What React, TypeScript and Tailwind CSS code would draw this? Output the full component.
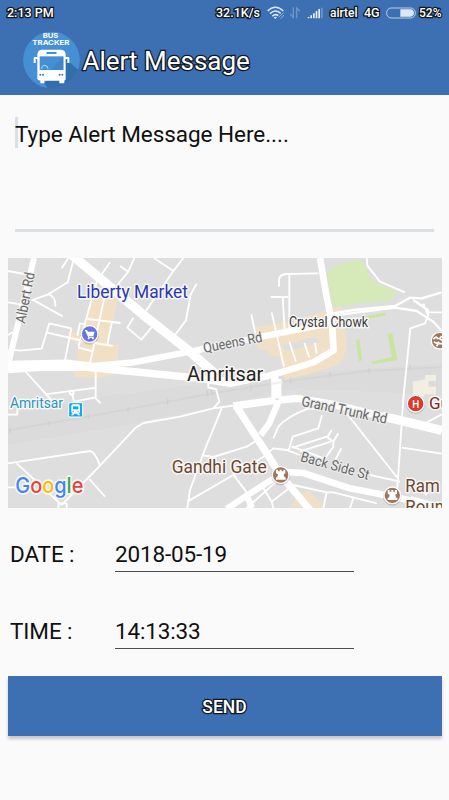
import React from "react";

const outlined =
  "text-white [paint-order:stroke_fill] [-webkit-text-stroke:2.6px_#111820]";

/* Street map, drawn at three units per pixel. */
const minorRoads = [
  "M24 48L88 60M24 142L62 148M102 136L188 184M95 136L145 118L203 82L222 9",
  "M145 118Q168 124 166 155M185 40L205 9M24 240L45 228",
  "M30 283L60 287L125 281L148 205L214 220M142 233L250 258L338 273M214 220L195 315",
  "M403 9L385 50L340 105M360 33L385 50M330 22L290 80L235 275M318 105L270 325",
  "M262 192L362 204M336 200L322 268M235 278L275 288M232 242L240 205L258 208",
  "M400 188L382 218L424 254L462 208M462 9L520 48L550 9M520 48L428 182",
  "M590 86L572 118L558 196L525 240M754 178L766 236M812 126H864M848 126L854 222M868 58V222",
  "M837 95V72Q840 58 860 57L955 55M815 172L852 335M868 260L888 320M913 264L928 308M945 264L950 296",
  "M75 348L145 425L160 440M135 418L290 398M287 348V430L302 445M216 414L222 440L287 427",
  "M24 479H52V460",
  "M24 625L270 588Q285 590 300 632M50 625L185 750M24 697H50M185 750L300 632L405 520L430 504L540 485L640 460L700 452",
  "M268 672L315 725M175 759V745H200V759",
  "M625 370V398L648 402L658 440L640 460M665 460L612 590L570 705L562 759M605 600L640 606L740 575L780 550M700 658L790 606L820 580L860 585L900 600M562 740L700 660",
  "M700 658L742 715M820 550L835 515Q860 485 925 460L990 466M865 590L878 545L955 520L966 480M878 578L980 545L1000 560L1000 575L970 618M900 590L992 560M983 545L995 525M1000 560L1015 535M1024 580L1000 625M875 575L920 590L970 610",
  "M1040 475L1195 672M1325 478L1270 508M1206 578L1325 596M1192 700L1210 430L1231 220L1275 205L1284 182L1270 146M1110 660L1200 680",
  "M1100 9L1102 32L1140 80L1215 112",
  "M790 700L815 740L820 759M815 740L880 690M740 759L840 670M880 690L980 712L1000 712L1130 745M980 712L970 759M1060 730L1050 759",
  "M1240 680L1280 720M1284 172H1325",
];

const MapRoads = () => (
  <g fill="none" stroke="#fff" strokeLinejoin="round">
    <g strokeWidth="5.500">
      {minorRoads.map((d) => (
        <path key={d} d={d} />
      ))}
      <circle cx="215" cy="413" r="6" />
    </g>
    <path d="M1000 175L1060 165L1185 153L1230 128L1265 130L1325 112M1000 182L1185 158L1250 168L1300 200L1325 228M1240 135L1284 165L1284 182" strokeWidth="7" />
    <path d="M102 9L24 330" strokeWidth="18" />
    <path d="M216 0L440 188L570 290L650 360" strokeWidth="28" />
    <path d="M24 327L200 323L280 333L400 322L590 286L790 244L998 203" strokeWidth="19" />
    <path d="M24 344L130 336L260 337L410 351L580 368L675 378" strokeWidth="22" />
    <path d="M620 375L690 386L800 364L860 347L940 322L1001 286L996 205L978 115L960 9" strokeWidth="20" />
    <path d="M824 362L832 425M700 453L820 437L890 430L1000 448L1325 528" strokeWidth="22" />
    <path d="M1150 484L1325 526" strokeWidth="27" />
    <path d="M829 372V425" strokeWidth="30" />
    <path d="M708 452L842 660L930 765" strokeWidth="22" />
    <path d="M835 440L808 505L782 540" strokeWidth="19" />
    <path d="M842 650L910 654L1050 700L1150 719L1250 740" strokeWidth="20" />
    <path d="M840 658L740 722L680 762M740 720L756 759" strokeWidth="19" />
    <path d="M1230 735L1325 760" strokeWidth="24" />
  </g>
);

const Castle = ({ x, y }: { x: number; y: number }) => (
  <g transform={`translate(${x} ${y})`}>
    <circle cy="3" r="28" fill="#000" opacity=".15" />
    <circle r="25" fill="#a1765c" stroke="#fff" strokeWidth="4" />
    <path d="M-14-16h6v5h5v-5h6v5h5v-5h6v11l-5 3 2 9h4v7h-29v-7h4l2-9-6-3z" fill="#fff" />
  </g>
);

const Map = () => (
  <svg
    viewBox="24 9 1302 750"
    preserveAspectRatio="none"
    className="block h-[250px] w-[434px] font-[Roboto,sans-serif]"
  >
    <rect x="24" y="9" width="1302" height="750" fill="#dedede" />
    <path d="M24 480L280 430L620 385L860 360L1325 325V420L880 400L640 456L430 500L24 570z" fill="#dbdbdb" />
    <g fill="#f1dfc6">
      <path d="M300 88L355 125L325 266L358 270L354 305L362 352L300 370L222 367L235 270L204 250V228L245 240L262 170z" />
      <path d="M762 216L870 200L1022 152L1030 205Q1053 285 1020 325Q970 350 855 374L838 304L810 300L800 286L775 282z" />
      <path d="M868 755L905 715L930 708L975 759z" />
    </g>
    <path d="M845 272L945 246L960 260L940 268L858 288z" fill="#dedede" />
    <path d="M980 50L1010 30L1072 13L1092 25L1114 75L1195 113L1165 137L1080 146L998 156z" fill="#d5e9b9" />
    <g fill="#c7e69b">
      <path d="M1095 184L1155 173L1158 181L1100 193zM1068 254L1078 252L1086 316L1076 319zM1162 237L1177 234L1192 315L1118 328L1114 321L1176 306z" />
    </g>
    <path d="M1238 380L1275 373V360H1308V378H1286L1285 395H1308V418H1275L1270 425H1240z" fill="#f3eee2" />
    <path d="M24 526L260 485L630 417L870 377L1100 348L1325 337" fill="none" stroke="#d5d5d5" strokeWidth="6" />
    <path d="M30 518v16M148 498v15M265 477v15M384 455v16M503 431v18M620 407l4 18M634 402l4 20M753 390v18M872 368v18M990 352v16M1108 340v16M1230 330v16" stroke="#cfcfcf" strokeWidth="4" />
    <MapRoads />
    <path d="M812 387L848 381" stroke="#f0f0f0" strokeWidth="6" />
    <ellipse cx="831" cy="433" rx="6" ry="3" fill="#dedede" />
    <circle cx="782" cy="542" r="3" fill="#dedede" />

    <g>
      <circle cx="269" cy="241" r="28" fill="#000" opacity=".15" />
      <circle cx="269" cy="237" r="25" fill="#6675df" stroke="#fff" strokeWidth="4" />
      <path d="M254 225h7l2 5h21l-4 14h-16z" fill="#fff" />
      <path d="M261 228l5 19h15" fill="none" stroke="#fff" strokeWidth="3" />
      <circle cx="266" cy="250" r="3" fill="#fff" />
      <circle cx="279" cy="250" r="3" fill="#fff" />
    </g>
    <g>
      <rect x="206" y="443" width="42" height="43" rx="4" fill="#11a9ef" stroke="#fff" strokeWidth="3" />
      <path d="M214 453q0-5 5-5h16q5 0 5 5v17q0 4-4 4l5 7h-7l-3-5h-8l-3 5h-7l5-7q-4 0-4-4z" fill="#fff" />
      <path d="M219 454h16v9h-16z" fill="#11a9ef" />
      <circle cx="220" cy="469" r="2" fill="#11a9ef" />
      <circle cx="234" cy="469" r="2" fill="#11a9ef" />
    </g>
    <Castle x={842} y={660} />
    <Castle x={1177} y={721} />
    <circle cx="1319" cy="257" r="25" fill="#a1765c" stroke="#fff" strokeWidth="4" />
    <path d="M1300 252l8-6 8 6M1325 243l-6 8 7 5M1302 260q9 9 15 0M1309 274l6-8h12" fill="none" stroke="#fff" strokeWidth="5" />
    <circle cx="1247" cy="449" r="28" fill="#000" opacity=".15" />
    <circle cx="1247" cy="446" r="25" fill="#df382e" stroke="#fff" strokeWidth="4" />
    <text x="1236.500" y="458" fontSize="34" textLength="21" lengthAdjust="spacingAndGlyphs" fontWeight="500" fill="#fff">H</text>

    <g stroke="#f7f7f7" strokeWidth="9" strokeLinejoin="round" style={{ paintOrder: "stroke" }}>
      <text x="231" y="129" fontSize="54" textLength="333" lengthAdjust="spacingAndGlyphs" fill="#2a38b4">Liberty Market</text>
      <text x="561" y="378" fontSize="59" textLength="229" lengthAdjust="spacingAndGlyphs" fill="#29241a">Amritsar</text>
      <text x="867" y="215" fontSize="42" textLength="237" lengthAdjust="spacingAndGlyphs" fill="#3a3a3a">Crystal Chowk</text>
      <text x="30" y="460" fontSize="43" textLength="159" lengthAdjust="spacingAndGlyphs" fill="#2a94c5">Amritsar</text>
      <text x="515" y="654" fontSize="54" textLength="285" lengthAdjust="spacingAndGlyphs" fill="#6e472d">Gandhi Gate</text>
      <text x="1216" y="711" fontSize="54" textLength="103" lengthAdjust="spacingAndGlyphs" fill="#6e472d">Ram</text>
      <text x="1216" y="773" fontSize="54" textLength="116" lengthAdjust="spacingAndGlyphs" fill="#6e472d">Roun</text>
      <text x="1287" y="463" fontSize="51" fill="#7b2921">Gu</text>
      <g fill="#686868" stroke="#ececec" strokeWidth="7" fontSize="43">
        <text transform="translate(75 207) rotate(-79)" textLength="155" lengthAdjust="spacingAndGlyphs">Albert Rd</text>
        <text transform="translate(613 294) rotate(-11)" textLength="179" lengthAdjust="spacingAndGlyphs">Queens Rd</text>
        <text transform="translate(902 452) rotate(12)" textLength="262" lengthAdjust="spacingAndGlyphs">Grand Trunk Rd</text>
        <text transform="translate(899 618) rotate(15.500)" textLength="212" lengthAdjust="spacingAndGlyphs">Back Side St</text>
      </g>
      <text x="46" y="714" className="font-[Inter,sans-serif]" fontSize="64" fontWeight="500" textLength="204" lengthAdjust="spacingAndGlyphs" strokeWidth="10">
        <tspan fill="#4285f4">G</tspan><tspan fill="#ea4335">o</tspan><tspan fill="#fbbc05">o</tspan><tspan fill="#4285f4">g</tspan><tspan fill="#34a853">l</tspan><tspan fill="#ea4335">e</tspan>
      </text>
    </g>
  </svg>
);

const BusLogo = () => (
  <svg viewBox="0 0 171 174" className="h-[58px] w-[57px] shrink-0 font-[Inter,sans-serif]">
    <defs>
      <clipPath id="disc"><circle cx="85.500" cy="87" r="85" /></clipPath>
    </defs>
    <circle cx="85.500" cy="87" r="85" fill="#4590d4" />
    <path d="M128 84L180 128V180H80L64 157z" fill="#326eaa" clipPath="url(#disc)" />
    <g fill="#fff" fontWeight="700">
      <text x="59" y="22" fontSize="19" textLength="47" lengthAdjust="spacingAndGlyphs">BUS</text>
      <text x="28" y="41" fontSize="19" textLength="111" lengthAdjust="spacingAndGlyphs">TRACKER</text>
    </g>
    <path d="M55 56H115Q128 58 128 70V78H137Q139 78 139 82V96H133V84H128V145Q128 148 124 149V157H109V149H64V157H52V149Q43 148 43 144V84H38V96H32V82Q32 78 36 78H43V70Q44 58 55 56z" fill="#fff" />
    <rect x="70" y="63" width="31" height="6" rx="2" fill="#4590d4" />
    <path d="M50 76H121V117H50z" fill="#4590d4" />
    <path d="M121 76V117H83z" fill="#3f86c9" />
    <path d="M55 113q2-10 10-10t10 10" fill="none" stroke="#fff" strokeWidth="2" />
    <g fill="#397bb9">
      <circle cx="52" cy="131" r="3" /><circle cx="60" cy="131" r="3" />
      <circle cx="110" cy="131" r="3" /><circle cx="118" cy="131" r="3" />
    </g>
  </svg>
);

const StatusBar = () => (
  <div className={`flex h-[26px] items-center pl-[7px] text-[12.5px] leading-[14px] font-medium whitespace-nowrap ${outlined}`}>
    <span className="w-[209px]">2:13 PM</span>
    <span className="w-[51px]">32.1K/s</span>
    <svg className="h-[14px] w-[18px]" viewBox="0 0 54 42" fill="none" stroke="#dce9f8" strokeWidth="4.500">
      <path d="M2 15Q25-7 49 15M9 23Q25 8 41 22M16 31Q25 22 34 29" />
      <path d="M20 34q5-4 10 0l-5 5z" fill="#dce9f8" stroke="none" />
      <path d="M35 34l15-14M41 38l10-11" strokeWidth="3" opacity=".55" />
    </svg>
    <svg className="ml-[4px] h-[14px] w-[12px]" viewBox="0 0 36 42" fill="none" stroke="#7396c8" strokeWidth="4">
      <path d="M13 4V34L3 24M23 37V6L33 16" />
    </svg>
    <svg className="ml-[6px] h-[14px] w-[17px]" viewBox="0 0 51 42" fill="#e8f0fa">
      <path d="M2 33h5v4H2zM10 28h5v9h-5zM18 22h5v15h-5zM26 15h5v22h-5zM34 9h5v28h-5z" />
      <path d="M42 5h5v32h-5z" opacity=".3" />
    </svg>
    <span className="ml-[6px] w-[34px] text-[12px]">airtel</span>
    <span className="w-[22px]">4G</span>
    <svg className="h-[12px] w-[30px]" viewBox="0 0 90 36">
      <rect x="2" y="3" width="86" height="30" rx="14" fill="none" stroke="#d4e2f3" strokeWidth="2.500" />
      <path d="M43 7H75Q84 10 84 18T75 29H43z" fill="#dbe7f5" />
    </svg>
    <span className="ml-[3px] text-[12px]">52%</span>
  </div>
);

const Field = ({ label, value }: { label: string; value: string }) => (
  <div className="flex h-[77px] items-start pl-[10px] text-[22.500px] leading-[28px] text-[#101010]">
    <label className="w-[105px] tracking-[-0.1px]">{label}</label>
    <div className="h-[32px] w-[239px] border-b border-[#4c4c4c] tracking-[-0.15px]">{value}</div>
  </div>
);

export default function App() {
  return (
    <div className="h-[800px] w-[449px] overflow-hidden bg-[#fafafa] font-[Roboto,sans-serif]">
      <header className="h-[95px] bg-[#3d6fb3]">
        <StatusBar />
        <div className="flex items-center pt-[5px] pl-[22.5px]">
          <BusLogo />
          <h1 className={`ml-[3px] pt-[2px] text-[26px] leading-[32px] font-normal ${outlined}`}>Alert Message</h1>
        </div>
      </header>
      <main>
        <div className="mx-[15px] mt-[22px] h-[115px] border-b-[3px] border-[#dce0e3]">
          <div className="flex h-[31px] items-center border-l-[3px] border-[#dce0e3]">
            <span className="-ml-[3px] pt-[2px] text-[22.500px] leading-[28px] tracking-[-0.04px] text-[#101010]">Type Alert Message Here....</span>
          </div>
        </div>
        <div className="mt-[26px] ml-[7.5px]">
          <Map />
        </div>
        <div className="mt-[32px]">
          <Field label="DATE :" value="2018-05-19" />
          <Field label="TIME :" value="14:13:33" />
        </div>
        <button className={`mt-[-18px] ml-[7.5px] flex h-[60px] w-[434px] items-center justify-center bg-[#3d6fb3] pt-[2px] text-[17.5px] font-medium shadow-[0_3px_3px_rgba(70,40,40,0.25)] ${outlined}`}>
          SEND
        </button>
      </main>
    </div>
  );
}
